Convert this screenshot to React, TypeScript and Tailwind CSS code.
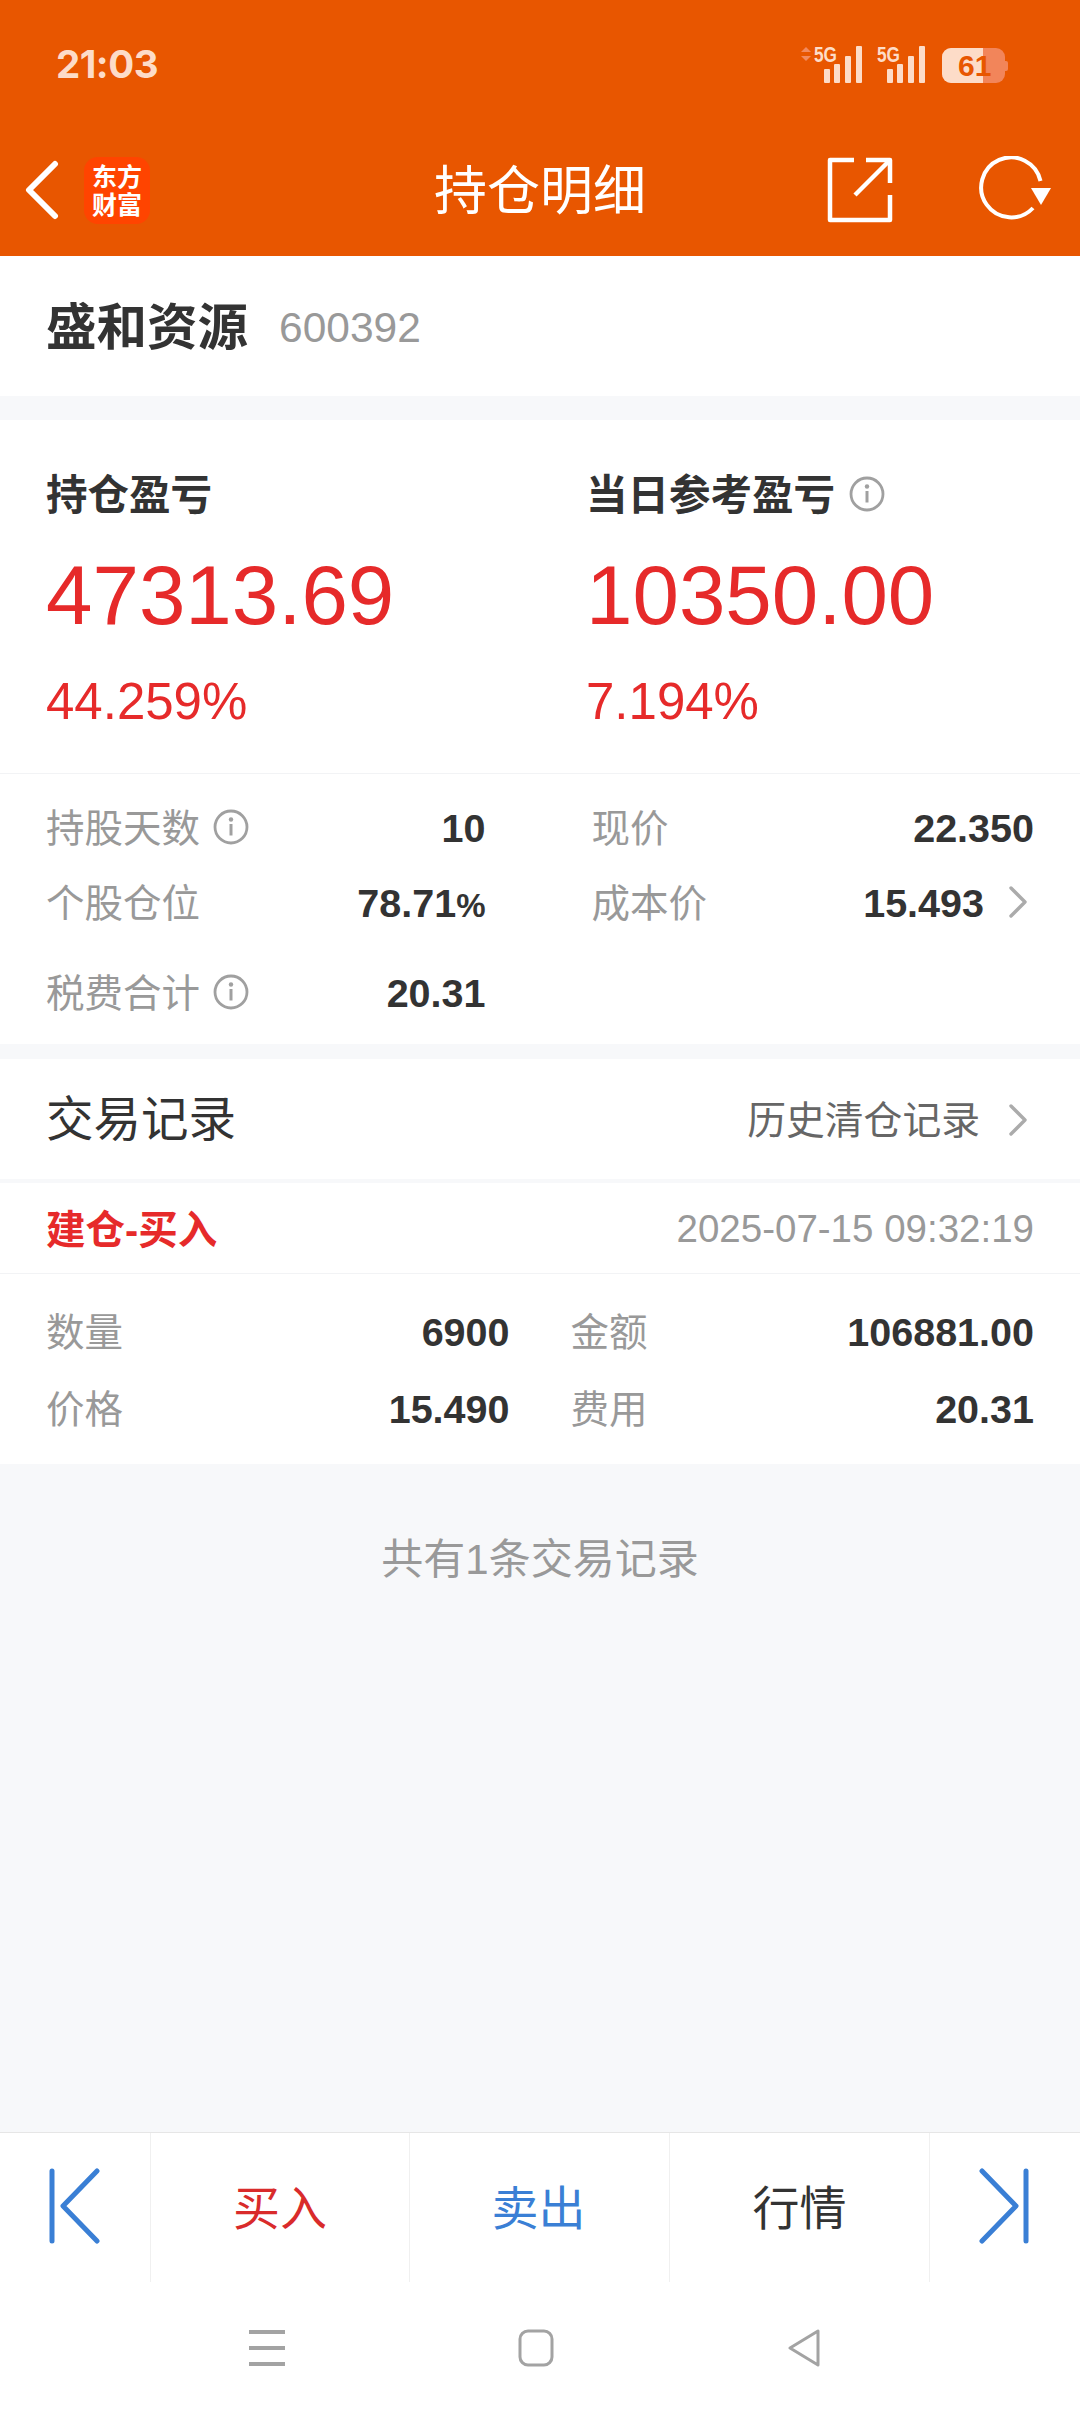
import type { ReactNode } from "react";

const Info = ({ className = "" }: { className?: string }) => (
  <svg width="36" height="36" viewBox="0 0 36 36" fill="none" stroke="#a0a0a0" className={className}>
    <circle cx="18" cy="18" r="16" strokeWidth="2.8" />
    <circle cx="18" cy="10.5" r="2.2" fill="#a0a0a0" stroke="none" />
    <path d="M18 15v11.5" strokeWidth="3" />
  </svg>
);

const Chevron = () => (
  <svg width="20" height="32" viewBox="0 0 20 32" fill="none" stroke="#ababab" strokeWidth="3.4" strokeLinecap="round" strokeLinejoin="round">
    <path d="M3 2l14 14L3 30" />
  </svg>
);

const Signal = ({ arrows }: { arrows?: boolean }) => (
  <svg width="62" height="38" viewBox="0 0 62 38" className="block overflow-visible">
    {arrows && (
      <g fill="#f28a5f">
        <path d="M-13 6l5-5 5 5z" />
        <path d="M-13 10l5 5 5-5z" />
      </g>
    )}
    <text x="0" y="16" fontSize="22" fontWeight="700" fill="#fddcc8" fontFamily="Liberation Sans, sans-serif" textLength="23" lengthAdjust="spacingAndGlyphs">5G</text>
    <g fill="#fddcc8">
      <rect x="10" y="23" width="6" height="14" rx="1" />
      <rect x="20" y="18" width="6" height="19" rx="1" />
      <rect x="31" y="10" width="6" height="27" rx="1" />
      <rect x="42" y="0" width="6" height="37" rx="1" />
    </g>
  </svg>
);

const Stat = ({ label, value, info, chevron, rowClass }: { label: string; value: ReactNode; info?: boolean; chevron?: boolean; rowClass: string }) => (
  <div className={`flex items-center justify-between ${rowClass}`}>
    <div className="flex items-center text-[38.5px] text-[#999999]">
      <span>{label}</span>
      {info && <Info className="ml-[13px] -mt-[4px]" />}
    </div>
    <div className="flex items-center">
      <span className="text-[39.5px] font-bold text-[#333333]">{value}</span>
      {chevron && <span className="ml-[24px] mr-[6px] -mt-[3px] flex"><Chevron /></span>}
    </div>
  </div>
);

const Trade = ({ left, leftVal, right, rightVal }: { left: string; leftVal: string; right: string; rightVal: string }) => (
  <div className="flex h-[77px] items-center text-[38.5px]">
    <div className="flex w-[464px] items-center justify-between">
      <span className="text-[#999999]">{left}</span>
      <span className="text-[39.5px] font-bold text-[#333333]">{leftVal}</span>
    </div>
    <div className="ml-[61px] flex w-[464px] items-center justify-between">
      <span className="text-[#999999]">{right}</span>
      <span className="text-[39.5px] font-bold text-[#333333]">{rightVal}</span>
    </div>
  </div>
);

export default function App() {
  return (
    <div className="flex h-[2414px] w-[1080px] flex-col overflow-hidden bg-[#f7f8fa] font-['Liberation_Sans','Noto_Sans_CJK_SC',sans-serif]">
      <header className="h-[256px] shrink-0 bg-[#e85600]">
        <div className="flex h-[128px] items-start justify-between pl-[56px] pr-[72px] pt-[46px]">
          <span className="text-[38.5px] leading-[36px] font-bold text-[#fddcc8] font-['Inter',sans-serif] tracking-[-0.5px]">21:03</span>
          <div className="flex items-start">
            <Signal arrows />
            <span className="ml-[1px] flex"><Signal /></span>
            <div className="ml-[3px] mt-[2px] flex items-center">
              <div className="relative flex h-[35px] w-[63px] overflow-hidden rounded-[9px] bg-[#f2855a]">
                <div className="h-full w-[41px] bg-[#fddcc8]" />
                <span className="absolute left-[16px] top-0 text-[30px] leading-[35px] font-bold text-[#e85600]">61</span>
              </div>
              <div className="h-[10px] w-[3px] rounded-r-[2px] bg-[#f2855a]" />
            </div>
          </div>
        </div>
        <div className="relative flex h-[128px] items-center pl-[24px]">
          <svg width="38" height="60" viewBox="0 0 38 60" fill="none" stroke="#ffffff" strokeWidth="6" strokeLinecap="round" strokeLinejoin="round" className="-mt-[4px]">
            <path d="M31 4L5 30l26 26" />
          </svg>
          <div className="ml-[22px] -mt-[3px] flex h-[67px] w-[66px] flex-col items-center justify-center rounded-[14px] bg-[#ff4400] text-[25px] leading-[28px] font-bold text-white">
            <span>东方</span>
            <span>财富</span>
          </div>
          <h1 className="absolute inset-x-0 top-0 text-center text-[53px] leading-[128px] font-normal text-white">持仓明细</h1>
          <div className="ml-auto mr-[27px] flex items-center -mt-[4px]">
            <svg width="66" height="66" viewBox="0 0 66 66" fill="none" stroke="#ffffff" strokeWidth="4.5" strokeLinejoin="round">
              <path d="M27 3H3v60h60V38" />
              <path d="M39 3h24v23" />
              <path d="M62 4L28 38" />
            </svg>
            <svg width="74" height="68" viewBox="0 0 74 68" fill="none" className="ml-[86px]">
              <path d="M54 52A30 30 0 1 1 61.5 25" stroke="#ffffff" strokeWidth="4" />
              <path d="M52 32h20l-10 17z" fill="#ffffff" />
            </svg>
          </div>
        </div>
      </header>

      <section className="mb-[24px] flex h-[140px] shrink-0 items-center bg-white pl-[46px] pt-[4px]">
        <span className="text-[50.5px] font-bold text-[#333333]">盛和资源</span>
        <span className="ml-[31px] text-[42.5px] text-[#999999]">600392</span>
      </section>

      <section className="shrink-0 bg-white">
        <div className="flex border-b border-[#f2f3f5] pl-[46px] pt-[46px] pb-[31px]">
          <div className="w-[540px]">
            <div className="flex h-[60px] items-center text-[41.5px] font-bold text-[#333333]">持仓盈亏</div>
            <div className="flex h-[139px] items-center text-[83.5px] text-[#e62a2a]">47313.69</div>
            <div className="flex h-[77px] items-center pb-[2px] text-[51px] text-[#e62a2a]">44.259%</div>
          </div>
          <div>
            <div className="flex h-[60px] items-center text-[41.5px] font-bold text-[#333333]">
              当日参考盈亏
              <Info className="ml-[14px] -mt-[4px]" />
            </div>
            <div className="flex h-[139px] items-center text-[83.5px] text-[#e62a2a]">10350.00</div>
            <div className="flex h-[77px] items-center pb-[2px] text-[51px] text-[#e62a2a]">7.194%</div>
          </div>
        </div>
        <div className="flex h-[270px] bg-white px-[46px] pt-[17px]">
          <div className="w-[440px]">
            <Stat label="持股天数" value="10" info rowClass="h-[75px]" />
            <Stat label="个股仓位" value={<>78.71<span className="text-[33px]">%</span></>} rowClass="h-[75px]" />
            <Stat label="税费合计" value="20.31" info rowClass="h-[105px]" />
          </div>
          <div className="ml-[106px] w-[443px]">
            <Stat label="现价" value="22.350" rowClass="h-[75px]" />
            <Stat label="成本价" value="15.493" chevron rowClass="h-[75px]" />
          </div>
        </div>
      </section>

      <section className="mt-[15px] shrink-0 bg-white">
        <div className="flex h-[120px] items-center justify-between border-b-[4px] border-[#f7f8fa] box-content pl-[46px] pr-[52px] pt-0">
          <span className="mt-[2px] text-[47.5px] text-[#333333]">交易记录</span>
          <div className="mt-[2px] flex items-center text-[38.8px] text-[#666666]">
            <span className="mt-[3px]">历史清仓记录</span>
            <span className="ml-[28px] flex"><Chevron /></span>
          </div>
        </div>
        <div className="flex h-[91px] items-center justify-between border-b border-[#f2f3f5] px-[46px]">
          <span className="mt-[5px] text-[39.5px] font-bold text-[#e62a2a]">建仓-买入</span>
          <span className="mt-[2px] text-[38.5px] text-[#999999]">2025-07-15 09:32:19</span>
        </div>
        <div className="px-[46px] pt-[20px] pb-[16px]">
          <Trade left="数量" leftVal="6900" right="金额" rightVal="106881.00" />
          <Trade left="价格" leftVal="15.490" right="费用" rightVal="20.31" />
        </div>
      </section>

      <main className="flex-1 pt-[66px] text-center text-[42px] leading-[60px] text-[#999999]">共有1条交易记录</main>

      <nav className="flex h-[150px] shrink-0 border-t border-[#e6e6e6] bg-white">
        <button className="flex w-[151px] items-center border-r border-[#f0f0f0] pl-[49px]">
          <svg width="52" height="76" viewBox="0 0 52 76" fill="none" stroke="#3a7fd5" strokeWidth="5" strokeLinecap="round" strokeLinejoin="round" className="-mt-[4px]">
            <path d="M3 3v70" />
            <path d="M48 3L14 38l34 35" />
          </svg>
        </button>
        <button className="w-[259px] border-r border-[#f0f0f0] pt-[3px] text-[47px] text-[#d92b2b]">买入</button>
        <button className="w-[260px] border-r border-[#f0f0f0] pt-[3px] pr-[2px] text-[47px] text-[#3a7fd5]">卖出</button>
        <button className="w-[260px] border-r border-[#f0f0f0] pt-[3px] text-[47px] text-[#333333]">行情</button>
        <button className="flex flex-1 items-center pl-[49px]">
          <svg width="52" height="76" viewBox="0 0 52 76" fill="none" stroke="#3a7fd5" strokeWidth="5" strokeLinecap="round" strokeLinejoin="round" className="-mt-[4px]">
            <path d="M47 3v70" />
            <path d="M3 3l34 35L3 73" />
          </svg>
        </button>
      </nav>

      <div className="flex h-[132px] shrink-0 items-center gap-[233px] bg-white pl-[249px]">
        <svg width="36" height="38" viewBox="0 0 36 38" fill="#a3a3a3">
          <rect x="0" y="1" width="36" height="4" />
          <rect x="0" y="17" width="36" height="4" />
          <rect x="0" y="33" width="36" height="4" />
        </svg>
        <svg width="36" height="38" viewBox="0 0 36 38" fill="none" stroke="#a3a3a3" strokeWidth="3">
          <rect x="2" y="2" width="32" height="34" rx="8" />
        </svg>
        <svg width="34" height="38" viewBox="0 0 34 38" fill="none" stroke="#a3a3a3" strokeWidth="3" strokeLinejoin="round">
          <path d="M31 2v34L3 19z" />
        </svg>
      </div>
    </div>
  );
}
